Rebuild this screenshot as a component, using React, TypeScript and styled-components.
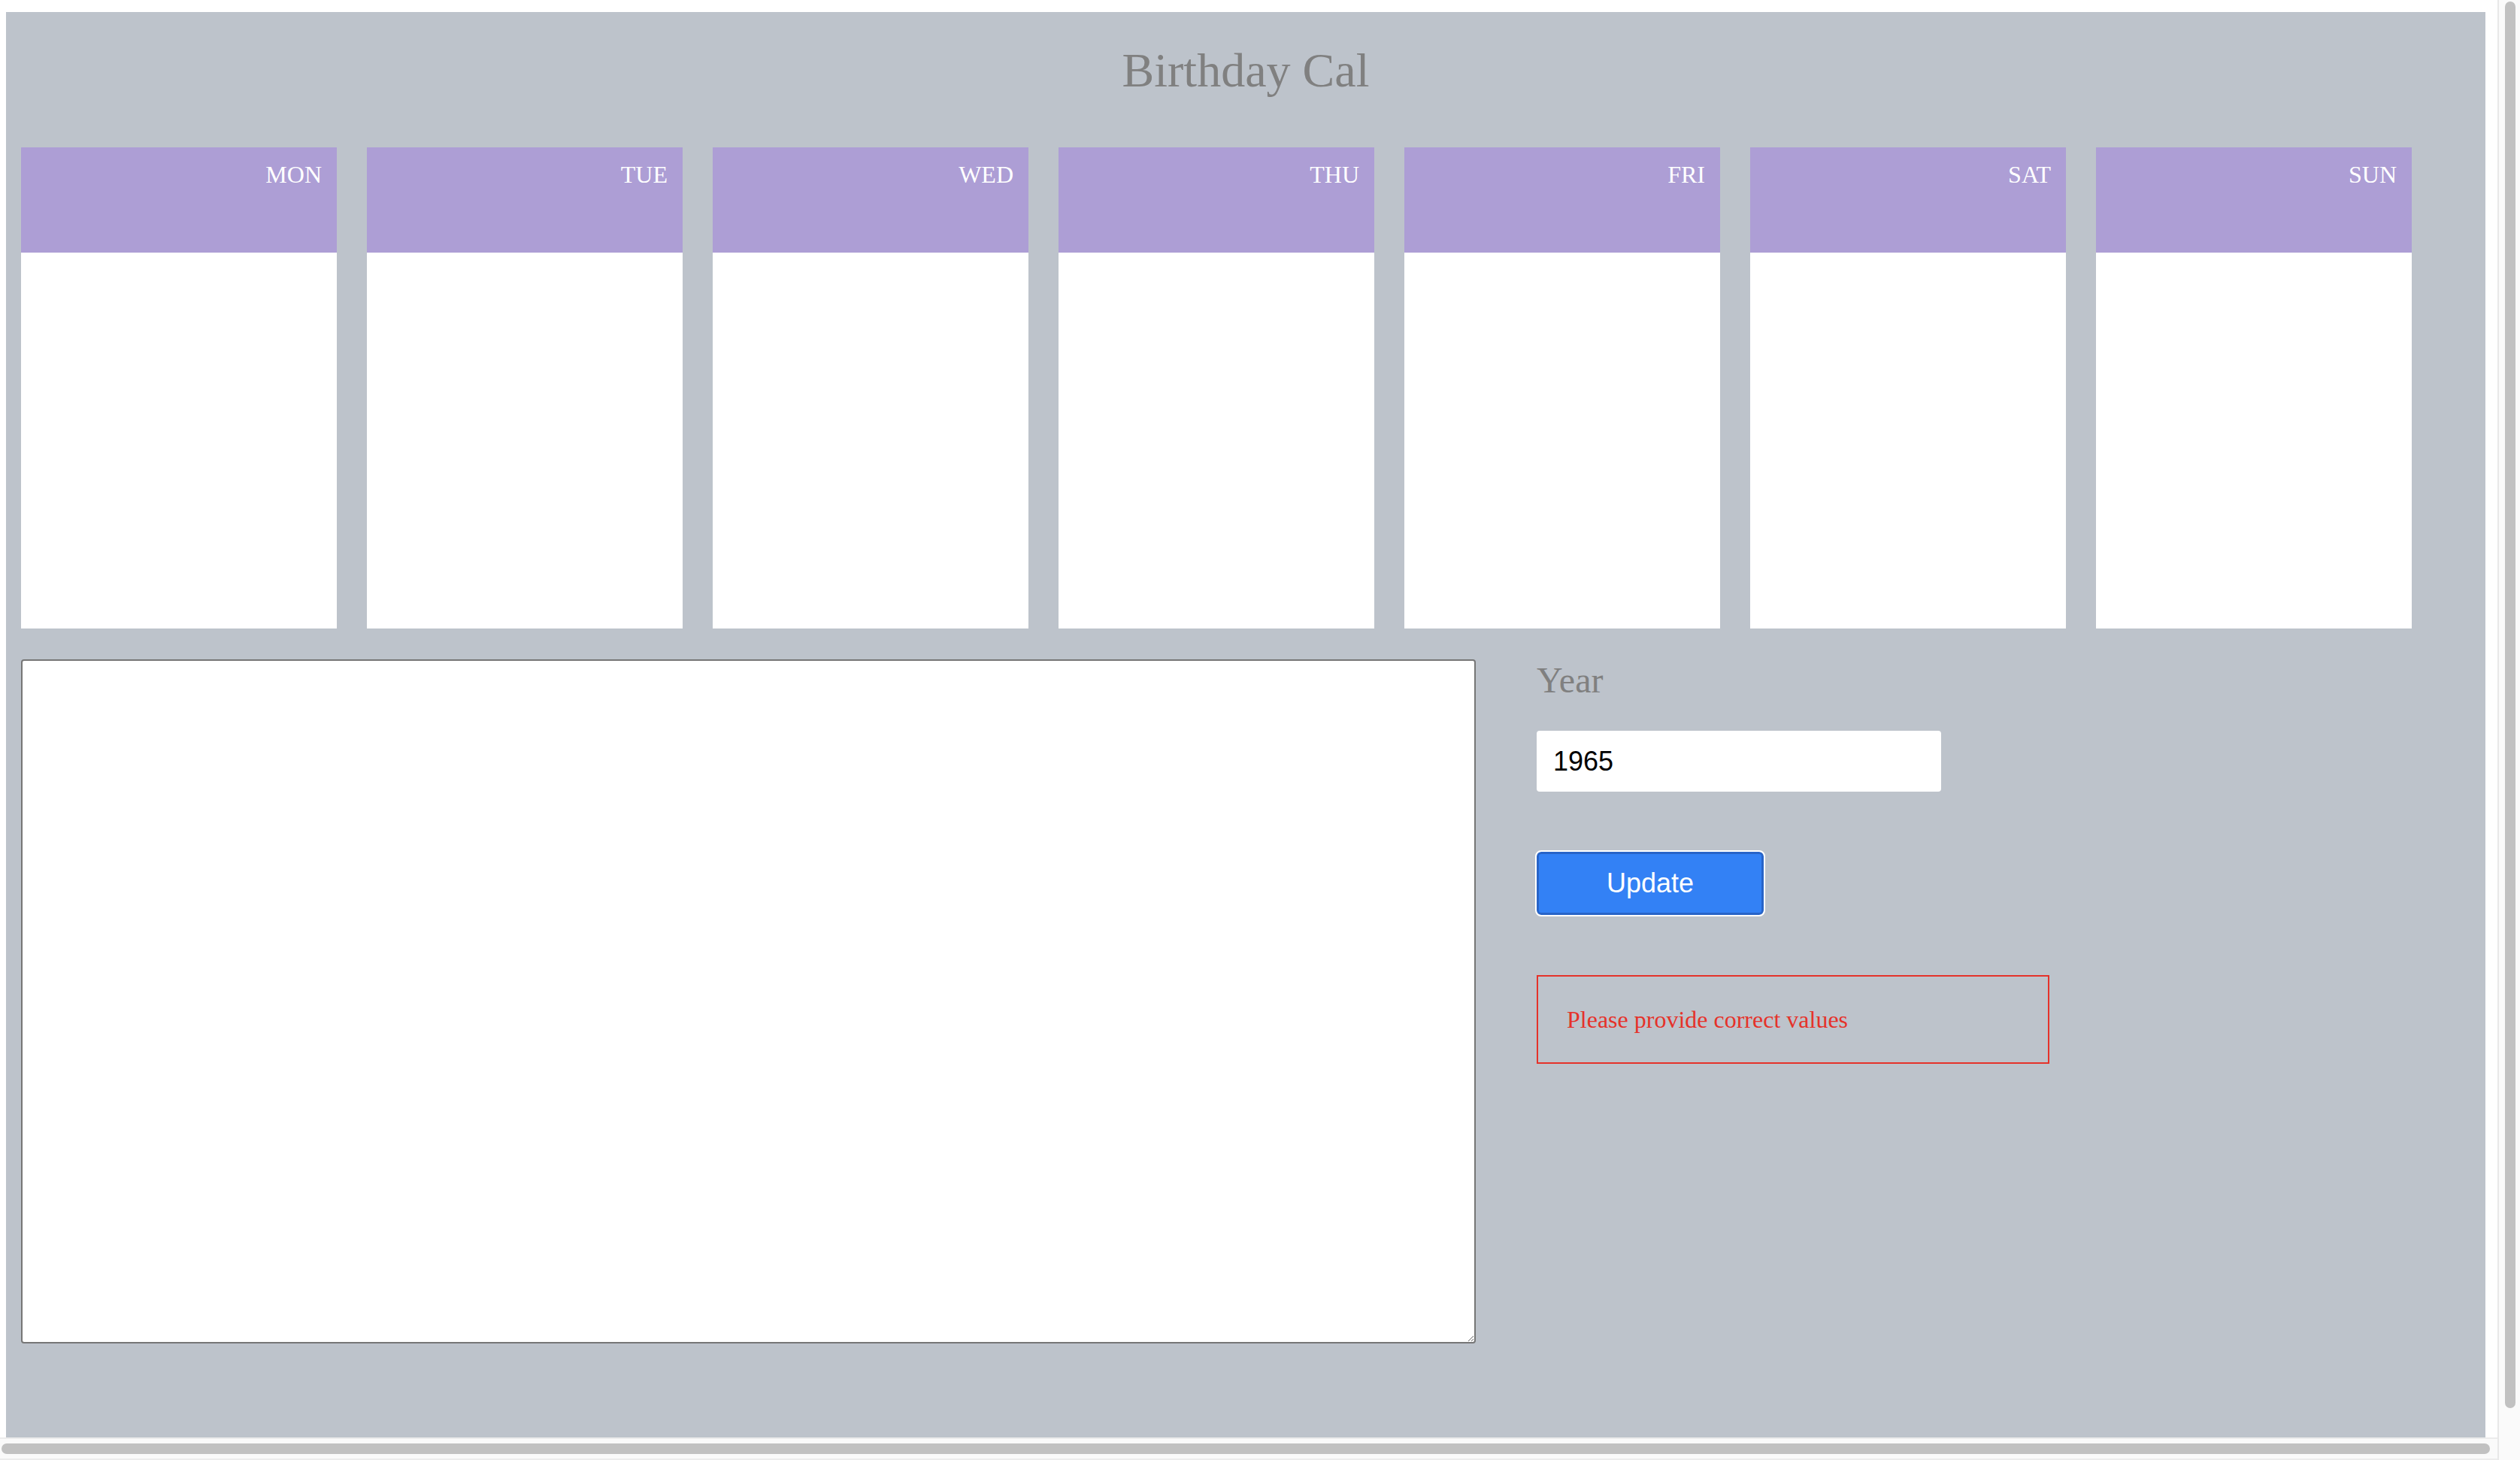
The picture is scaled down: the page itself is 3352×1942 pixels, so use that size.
import styled, { createGlobalStyle } from 'styled-components';

const GlobalStyle = createGlobalStyle`
  html {
    background: #ffffff;
    overflow: hidden;
  }
  body {
    margin: 0;
    padding: 16px 26px 40px 8px;
    width: 3298px;
    font-family: 'Liberation Serif', 'Times New Roman', serif;
  }
`;

const Board = styled.div`
  box-sizing: border-box;
  width: 3298px;
  height: 1896px;
  padding: 41px 20px 125px;
  background-color: #bdc3cb;
  display: flex;
  flex-direction: column;
`;

const Title = styled.h1`
  margin: 0;
  font-size: 64px;
  line-height: 74px;
  font-weight: 400;
  color: #808080;
  text-align: center;
`;

const Week = styled.div`
  display: flex;
  gap: 40px;
  margin-top: 65px;
`;

const Day = styled.div`
  width: 420px;
  height: 640px;
  display: flex;
  flex-direction: column;
  background-color: #ffffff;
`;

const DayHead = styled.div`
  box-sizing: border-box;
  height: 140px;
  padding: 18px 20px 0;
  background-color: #ad9ed5;
  color: #ffffff;
  font-size: 32px;
  text-align: right;
`;

const Bottom = styled.div`
  display: flex;
  gap: 81px;
  margin-top: 41px;
`;

const Notes = styled.textarea`
  box-sizing: border-box;
  width: 1935px;
  height: 910px;
  margin: 0;
  padding: 4px;
  border: 2px solid #767676;
  border-radius: 4px;
  background: #ffffff;
  font-family: 'Liberation Mono', monospace;
  font-size: 26px;
  outline: none;
`;

const Side = styled.div`
  display: flex;
  flex-direction: column;
  align-items: flex-start;
`;

const Label = styled.label`
  font-size: 48px;
  color: #808080;
`;

const YearInput = styled.input`
  box-sizing: border-box;
  width: 538px;
  height: 81px;
  margin-top: 40px;
  padding: 0 22px;
  border: none;
  border-radius: 4px;
  background: #ffffff;
  color: #000000;
  font-family: 'Liberation Sans', Arial, sans-serif;
  font-size: 36px;
  outline: none;
`;

const UpdateButton = styled.button`
  box-sizing: border-box;
  width: 302px;
  height: 84px;
  margin-top: 80px;
  border: 3px solid #2864c8;
  border-radius: 6px;
  outline: 2px solid #ffffff;
  background-color: #3381f5;
  color: #ffffff;
  font-family: 'Liberation Sans', Arial, sans-serif;
  font-size: 36px;
  cursor: pointer;
`;

const ErrorBox = styled.div`
  box-sizing: border-box;
  width: 682px;
  height: 118px;
  margin-top: 80px;
  padding: 0 38px;
  display: flex;
  align-items: center;
  border: 2px solid #e5322a;
  color: #e5322a;
  font-size: 32px;
`;

/* window scrollbars, drawn over the viewport edges */
const ScrollTrack = styled.div<{ $vertical?: boolean }>`
  position: fixed;
  box-sizing: border-box;
  display: flex;
  background: #fafafa;
  ${(p) =>
    p.$vertical
      ? `
    top: 0;
    right: 0;
    width: 30px;
    height: 100vh;
    padding: 2px 6px 69px 8px;
    border-left: 2px solid #e8e8e8;
  `
      : `
    left: 0;
    bottom: 0;
    width: 3322px;
    height: 30px;
    padding: 6px 10px 6px 2px;
    border-top: 2px solid #ececec;
    border-bottom: 2px solid #ececec;
  `}
`;

const ScrollThumb = styled.div`
  flex: 1;
  border-radius: 8px;
  background: #c1c1c1;
`;

const days = ['MON', 'TUE', 'WED', 'THU', 'FRI', 'SAT', 'SUN'];

const App = () => {
  return (
    <>
      <GlobalStyle />
      <Board>
        <Title>Birthday Cal</Title>
        <Week>
          {days.map((d) => (
            <Day key={d}>
              <DayHead>{d}</DayHead>
            </Day>
          ))}
        </Week>
        <Bottom>
          <Notes />
          <Side>
            <Label htmlFor='year'>Year</Label>
            <YearInput id='year' defaultValue='1965' />
            <UpdateButton>Update</UpdateButton>
            <ErrorBox>Please provide correct values</ErrorBox>
          </Side>
        </Bottom>
      </Board>
      <ScrollTrack $vertical>
        <ScrollThumb />
      </ScrollTrack>
      <ScrollTrack>
        <ScrollThumb />
      </ScrollTrack>
    </>
  );
};

export default App;
